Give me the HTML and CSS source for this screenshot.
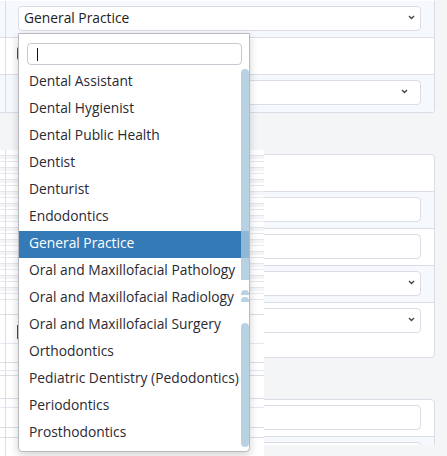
FILE: index.html
```html
<!DOCTYPE html>
<html>
<head>
<meta charset="utf-8">
<link rel="stylesheet" href="styles.css">
</head>
<body>
<div class="page">
  <section class="card c1">
    <div class="row alt">
      <div class="select">
        <span class="value">General Practice</span>
        <svg class="chev" width="7" height="5" viewBox="0 0 7 5"><path d="M1 1l2.5 2.5L6 1" fill="none" stroke="#444" stroke-width="1.4"/></svg>
      </div>
    </div>
    <div class="row"><span class="check"></span></div>
    <div class="row alt">
      <div class="select inset">
        <svg class="chev" width="7" height="5" viewBox="0 0 7 5"><path d="M1 1l2.5 2.5L6 1" fill="none" stroke="#444" stroke-width="1.4"/></svg>
      </div>
    </div>
  </section>

  <section class="card c2">
    <div class="row"></div>
    <div class="row alt"><div class="input"></div></div>
    <div class="row"><div class="input"></div></div>
    <div class="row alt">
      <div class="select">
        <svg class="chev" width="7" height="5" viewBox="0 0 7 5"><path d="M1 1l2.5 2.5L6 1" fill="none" stroke="#444" stroke-width="1.4"/></svg>
      </div>
    </div>
    <div class="row tall">
      <div class="select">
        <svg class="chev" width="7" height="5" viewBox="0 0 7 5"><path d="M1 1l2.5 2.5L6 1" fill="none" stroke="#444" stroke-width="1.4"/></svg>
      </div>
    </div>
  </section>

  <section class="card c3">
    <div class="row"><div class="input"></div></div>
    <div class="row alt"><div class="input"></div></div>
  </section>
</div>

<div class="glitch-a"></div>
<div class="glitch-b"><span class="check-mark"></span></div>
<div class="cut"></div>

<div class="dropdown">
  <div class="search"><span class="caret"></span></div>
  <ul class="options">
    <li>Dental Assistant</li>
    <li>Dental Hygienist</li>
    <li>Dental Public Health</li>
    <li>Dentist</li>
    <li>Denturist</li>
    <li>Endodontics</li>
    <li class="selected">General Practice</li>
    <li>Oral and Maxillofacial Pathology</li>
    <li>Oral and Maxillofacial Radiology</li>
    <li>Oral and Maxillofacial Surgery</li>
    <li>Orthodontics</li>
    <li>Pediatric Dentistry (Pedodontics)</li>
    <li>Periodontics</li>
    <li>Prosthodontics</li>
  </ul>
  <span class="thumb t1"></span>
  <span class="thumb t2"></span>
  <span class="thumb t3"></span>
  <span class="thumb t4"></span>
</div>
</body>
</html>
```

FILE: styles.css
```css
html, body {
  margin: 0;
  padding: 0;
}
body {
  background: #f4f5f7;
  font-family: "Open Sans", "DejaVu Sans", sans-serif;
  font-size: 13.8px;
  color: #333;
  width: 447px;
  height: 456px;
  overflow: hidden;
  position: relative;
}
.page {
  display: flex;
  flex-direction: column;
  gap: 41px;
}
.card {
  margin: 0 12px 0 -2px;
  background: #fff;
  border: 1px solid #dcdce6;
  border-radius: 4px;
}
.c1 { border-top-color: transparent; border-radius: 0 0 4px 4px; }
.row {
  box-sizing: border-box;
  height: 37px;
  padding: 5px 13px 0 19px;
  border-bottom: 1px solid #dcdce6;
  position: relative;
  background-image: linear-gradient(to right, transparent 6px, #dcdce6 6px, #dcdce6 7px, transparent 7px);
}
.row:last-child { border-bottom: none; }
.row.alt { background-color: #f5f9fd; }
.row.tall { height: 54px; }
.select, .input {
  height: 25px;
  box-sizing: border-box;
  border: 1px solid #dcdce6;
  border-radius: 4px;
  background: #fff;
  display: flex;
  align-items: center;
  justify-content: space-between;
  padding: 0 5px;
}
.select.inset { padding-right: 12px; justify-content: flex-end; }
.c2 .select { justify-content: flex-end; }
.value {
  color: #222;
  margin-top: -2px;
}
.chev { display: block; margin-top: -2px; }
.check {
  position: absolute;
  left: 18px;
  top: 9px;
  width: 14px;
  height: 13px;
  background: #1d5c9b;
  border-radius: 2px;
}
.glitch-a {
  position: absolute;
  left: 0;
  top: 150px;
  width: 264px;
  height: 150px;
  background:
    linear-gradient(to right, transparent 5px, #dcdce6 5px, #dcdce6 6px, transparent 6px),
    repeating-linear-gradient(to bottom, #fff 0, #fff 5px, #e4e6ec 5px, #e4e6ec 6px, #f4f5f8 6px, #f4f5f8 9px, #fff 9px, #fff 11px, #e8e9ef 11px, #e8e9ef 12px);
}
.glitch-b {
  position: absolute;
  left: 0;
  top: 300px;
  width: 264px;
  height: 156px;
  background:
    linear-gradient(to right, transparent 5px, #dcdce6 5px, #dcdce6 6px, transparent 6px),
    linear-gradient(to bottom, transparent 14px, #dcdce6 14px, #dcdce6 15px, transparent 15px,
      transparent 43px, #e4e8f0 43px, #e4e8f0 44px, transparent 44px,
      transparent 62px, #dcdce6 62px, #dcdce6 63px, transparent 63px,
      transparent 70px, #e4e8f0 70px, #e4e8f0 71px, transparent 71px,
      transparent 75px, #dcdce6 75px, #dcdce6 76px, transparent 76px,
      transparent 98px, #dcdce6 98px, #dcdce6 99px, transparent 99px,
      transparent 107px, #e4e8f0 107px, #e4e8f0 108px, transparent 108px,
      transparent 127px, #dcdce6 127px, #dcdce6 128px, transparent 128px,
      transparent 137px, #dcdce6 137px, #dcdce6 138px, transparent 138px),
    #fff;
}
.check-mark {
  position: absolute;
  left: 17px;
  top: 25px;
  width: 6px;
  height: 14px;
  background: #1d5c9b;
}
.cut {
  position: absolute;
  left: 264px;
  right: 0;
  top: 445px;
  bottom: 0;
  background: #f4f5f7;
}
.dropdown {
  position: absolute;
  left: 18px;
  top: 33px;
  width: 232px;
  height: 419px;
  box-sizing: border-box;
  background: #fff;
  border: 1px solid #b9b9c0;
  border-radius: 0 0 4px 4px;
  box-shadow: 0 3px 8px rgba(0,0,0,0.18);
}
.search {
  margin: 9px 7px 0 8px;
  height: 22px;
  box-sizing: border-box;
  border: 1px solid #c8c8d0;
  border-radius: 4px;
  position: relative;
}
.caret {
  position: absolute;
  left: 9px;
  top: 4px;
  width: 1px;
  height: 13px;
  background: #111;
}
.options {
  list-style: none;
  margin: 4px 0 0 0;
  padding: 0;
}
.options li {
  height: 27px;
  line-height: 24px;
  padding-left: 10px;
  white-space: nowrap;
  color: #2a2a33;
}
.options li.selected {
  background: #337ab7;
  color: #fff;
}
.thumb {
  position: absolute;
  left: 222px;
  width: 8px;
  background: rgba(168,199,220,0.8);
}
.t1 { top: 35px; height: 211px; border-radius: 4px 4px 0 0; }
.t2 { top: 256px; height: 5px; border-radius: 4px 4px 0 0; }
.t3 { top: 263px; height: 5px; border-radius: 4px 4px 0 0; }
.t4 { top: 289px; height: 124px; border-radius: 4px; }
```
